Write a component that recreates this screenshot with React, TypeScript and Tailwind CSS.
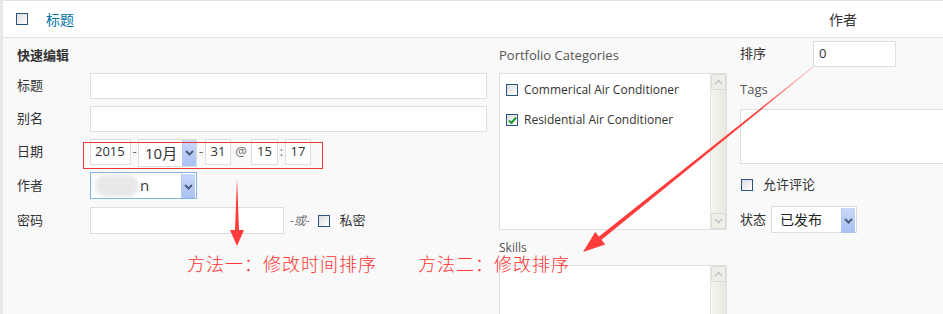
import React from "react";

const font = "font-['Open_Sans','Noto_Sans_CJK_SC',sans-serif]";

function Box({ className = "" }: { className?: string }) {
  return (
    <div
      className={`w-[12px] h-[12px] border border-[#2a5580] bg-gradient-to-br from-[#dcdcdc] to-white ${className}`}
    />
  );
}

function Arrow({ className = "" }: { className?: string }) {
  return (
    <div
      className={`w-[14px] h-full flex items-center justify-center bg-gradient-to-b from-[#c9d8fb] to-[#a9c0f3] border-l border-[#b3c6ef] ${className}`}
    >
      <svg width="9" height="6" viewBox="0 0 9 6">
        <path d="M1 1 L4.5 4.5 L8 1" stroke="#4d5f80" strokeWidth="2" fill="none" />
      </svg>
    </div>
  );
}

function ScrollBtn({ up }: { up: boolean }) {
  return (
    <div className="w-[15px] h-[16px] bg-[#efeee8] border border-[#dcdbd3] rounded-[2px] flex items-center justify-center">
      <svg width="9" height="6" viewBox="0 0 9 6">
        <path d={up ? "M1 5 L4.5 1.5 L8 5" : "M1 1 L4.5 4.5 L8 1"} stroke="#c6c6c0" strokeWidth="1.6" fill="none" />
      </svg>
    </div>
  );
}

function Row({ label, children, h = "h-[26px]", mt = "mt-[7px]" }: { label: string; children: React.ReactNode; h?: string; mt?: string }) {
  return (
    <div className={`flex items-center ${h} ${mt}`}>
      <div className="w-[73px] shrink-0 text-[13px] text-[#333]">{label}</div>
      {children}
    </div>
  );
}

const field = "h-[26px] border border-[#dddddd] bg-white";

export default function App() {
  return (
    <div className={`relative w-[943px] h-[314px] overflow-hidden bg-[#f9f9f9] border-l-[3px] border-[#e8e8e8] ${font}`}>
      {/* header row */}
      <div className="h-[38px] bg-white border-t border-b border-[#e1e1e1] flex items-center">
        <Box className="ml-[13px]" />
        <span className="ml-[18px] text-[14px] text-[#0073aa]">标题</span>
        <span className="ml-[755px] text-[14px] text-[#333]">作者</span>
      </div>

      <div className="flex">
        {/* left column */}
        <div className="pl-[14px] w-[484px] shrink-0">
          <div className="mt-[8px] h-[18px] leading-[18px] text-[13px] font-semibold text-[#333]">快速编辑</div>
          <Row label="标题" mt="mt-[9px]">
            <div className={`${field} flex-1`} />
          </Row>
          <Row label="别名">
            <div className={`${field} flex-1`} />
          </Row>
          <Row label="日期">
            <div className="flex items-center text-[13px] text-[#333]">
              <div className={`${field} w-[41px] flex items-center pl-[4px]`}>2015</div>
              <span className="w-[7px] text-center text-[#666]">-</span>
              <div className="h-[28px] w-[59px] mt-[2px] border border-[#dddddd] bg-white flex">
                <span className="flex-1 pl-[6px] text-[15px] leading-[26px]">10月</span>
                <Arrow />
              </div>
              <span className="w-[8px] text-center text-[#666]">-</span>
              <div className={`${field} w-[26px] flex items-center justify-center`}>31</div>
              <span className="w-[20px] text-center text-[#666]">@</span>
              <div className={`${field} w-[27px] flex items-center justify-center`}>15</div>
              <span className="w-[7px] text-center text-[#666]">:</span>
              <div className={`${field} w-[26px] flex items-center justify-center`}>17</div>
            </div>
          </Row>
          <Row label="作者" h="h-[27px]">
            <div className="relative h-[27px] w-[107px] border border-[#7eb4ea] bg-white flex overflow-hidden">
              <div className="flex-1 flex items-center pl-[4px]">
                <div className="w-[44px] h-[22px] rounded-full bg-[#e6e8ea] blur-[2px]" />
                <span className="ml-[1px] text-[15px] text-[#333]">n</span>
              </div>
              <Arrow className="my-[1px] mr-[1px] h-[23px]" />
            </div>
          </Row>
          <Row label="密码" h="h-[27px]" mt="mt-[8px]">
            <div className="h-[27px] w-[194px] border border-[#dddddd] bg-white" />
            <span className="ml-[6px] text-[12px] italic text-[#777]">-或-</span>
            <Box className="ml-[8px]" />
            <span className="ml-[10px] text-[13px] text-[#333]">私密</span>
          </Row>
        </div>

        {/* middle column */}
        <div className="ml-[12px] w-[228px] shrink-0">
          <div className="mt-[8px] h-[18px] leading-[18px] text-[13px] text-[#555]">Portfolio Categories</div>
          <div className="mt-[9px] h-[157px] border border-[#dfdfdf] bg-white flex">
            <div className="flex-1 pl-[6px] pt-[9px] text-[12px] text-[#333]">
              <div className="flex items-center h-[14px]">
                <Box />
                <span className="ml-[6px]">Commerical Air Conditioner</span>
              </div>
              <div className="flex items-center h-[14px] mt-[16px]">
                <div className="relative w-[12px] h-[12px] border border-[#2a5580] bg-gradient-to-br from-[#dcdcdc] to-white">
                  <svg className="absolute left-[1px] top-[1px]" width="9" height="9" viewBox="0 0 9 9">
                    <path d="M1 4.5 L3.5 7 L8 1.5" stroke="#1e9e2c" strokeWidth="2" fill="none" />
                  </svg>
                </div>
                <span className="ml-[6px]">Residential Air Conditioner</span>
              </div>
            </div>
            <div className="w-[16px] h-full flex flex-col justify-between bg-gradient-to-r from-[#f5f4ef] to-[#e9e8df] border-l border-[#e6e5de]">
              <ScrollBtn up />
              <ScrollBtn up={false} />
            </div>
          </div>
          <div className="mt-[11px] h-[14px] leading-[14px] text-[12px] text-[#555]">Skills</div>
          <div className="mt-[10px] h-[60px] border border-[#dfdfdf] bg-white flex">
            <div className="flex-1" />
            <div className="w-[16px] h-full flex flex-col bg-gradient-to-r from-[#f5f4ef] to-[#e9e8df] border-l border-[#e6e5de]">
              <ScrollBtn up />
            </div>
          </div>
        </div>

        {/* right column */}
        <div className="ml-[13px] flex-1 min-w-0 text-[13px]">
          <div className="mt-[3px] flex items-center h-[26px]">
            <span className="w-[73px] shrink-0 text-[#333]">排序</span>
            <div className="h-[26px] w-[83px] border border-[#dddddd] bg-white flex items-center pl-[5px] text-[#333]">0</div>
          </div>
          <div className="mt-[13px] h-[18px] leading-[18px] text-[#555]">Tags</div>
          <div className="mt-[11px] h-[55px] w-[220px] border border-[#dfdfdf] bg-white" />
          <div className="mt-[14px] flex items-center h-[14px]">
            <Box className="ml-[1px]" />
            <span className="ml-[10px] text-[#333]">允许评论</span>
          </div>
          <div className="mt-[14px] flex items-center h-[27px]">
            <span className="w-[31px] shrink-0 text-[#333]">状态</span>
            <div className="h-[27px] w-[86px] border border-[#dddddd] bg-white flex">
              <span className="flex-1 pl-[8px] text-[14px] leading-[25px] text-[#222]">已发布</span>
              <Arrow className="my-[1px] mr-[1px] h-[23px]" />
            </div>
          </div>
        </div>
      </div>

      {/* red annotations */}
      <svg className="absolute left-[-3px] top-0 pointer-events-none" width="943" height="314" viewBox="0 0 943 314">
        <defs>
          <linearGradient id="fade" x1="813" y1="67" x2="583" y2="252" gradientUnits="userSpaceOnUse">
            <stop offset="0" stopColor="#ff4444" stopOpacity="0.35" />
            <stop offset="0.25" stopColor="#ff3b3b" stopOpacity="1" />
            <stop offset="1" stopColor="#ff3b3b" />
          </linearGradient>
        </defs>
        <rect x="83.5" y="142.5" width="239" height="26" fill="none" stroke="#e83a3a" strokeWidth="1" />
        <polygon points="237,178 239,230 244,230 237,246 230,230 235,230" fill="#ff3b3b" />
        <polygon
          points="813.3,67.3 601.5,239.8 605.2,244.4 583,252 595.2,231.9 599,236.6 812.7,66.7"
          fill="url(#fade)"
        />
      </svg>
      <div className="absolute left-[184px] top-[252px] text-[18px] leading-[22px] tracking-[1px] font-light text-[#ff3333] font-['Noto_Sans_CJK_SC',sans-serif] whitespace-nowrap">
        方法一：修改时间排序
      </div>
      <div className="absolute left-[415px] top-[252px] text-[18px] leading-[22px] tracking-[1px] font-light text-[#ff3333] font-['Noto_Sans_CJK_SC',sans-serif] whitespace-nowrap">
        方法二：修改排序
      </div>
    </div>
  );
}
